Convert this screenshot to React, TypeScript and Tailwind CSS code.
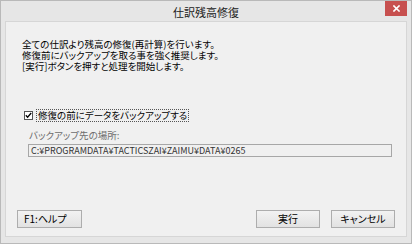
import React from "react";

const jp = "font-['Noto_Sans_CJK_JP','Noto_Sans_CJK_SC',sans-serif] [font-feature-settings:'palt']";

function Btn({ children, className = "" }: { children: React.ReactNode; className?: string }) {
  return (
    <div
      className={`h-[18px] w-[64px] flex items-center border border-[#adadad] bg-gradient-to-b from-[#f2f2f2] to-[#e2e2e2] text-[10px] leading-none text-black ${className}`}
    >
      {children}
    </div>
  );
}

export default function App() {
  return (
    <div className={`w-[412px] h-[244px] bg-[#e6e6e6] border border-[#b9b9b9] flex flex-col ${jp}`}>
      <div className="relative h-[20px] shrink-0 flex items-center justify-center">
        <span className="text-[11px] leading-none text-[#222] mt-[3px]">仕訳残高修復</span>
        <div className="absolute right-[4px] top-0 w-[22px] h-[15px] bg-[#c7504f] flex items-center justify-center">
          <svg width="7" height="7" viewBox="0 0 7 7">
            <path d="M1 1L6 6M6 1L1 6" stroke="#fff" strokeWidth="1.6" strokeLinecap="square" />
          </svg>
        </div>
      </div>
      <div className="mx-[4px] mb-[6px] flex-1 border border-[#d6d6d6] bg-[#f0f0f0] flex flex-col">
        <div className="pl-[16px] pt-[17px] text-[9.5px] leading-[11px] text-black">
          <div>全ての仕訳より残高の修復(再計算)を行います。</div>
          <div>修復前にバックアップを取る事を強く推奨します。</div>
          <div>[実行]ボタンを押すと処理を開始します。</div>
        </div>
        <div className="mt-[37px] pl-[18px] flex items-center h-[13px]">
          <div className="w-[9px] h-[9px] border border-[#555] bg-white flex items-center justify-center">
            <svg width="7" height="7" viewBox="0 0 7 7">
              <path d="M0.8 3.2L2.6 5.2L6.2 1" stroke="#000" strokeWidth="1.3" fill="none" />
            </svg>
          </div>
          <div className="ml-[3px] h-[13px] px-[1px] border border-dotted border-[#555] flex items-center text-[9.5px] leading-none text-black">
            修復の前にデータをバックアップする
          </div>
        </div>
        <div className="mt-[7px] pl-[23px] text-[9.5px] leading-[12px] text-[#6d6d6d]">バックアップ先の場所:</div>
        <div className="mt-[3px] ml-[22px] w-[364px] h-[13px] border border-[#a7a7a7] bg-[#f0f0f0] flex items-center pl-[2px] text-[9px] leading-none text-[#333]">
          C:¥PROGRAMDATA¥TACTICSZAI¥ZAIMU¥DATA¥0265
        </div>
        <div className="mt-auto mb-[8px] flex items-center pl-[11px] pr-[11px]">
          <Btn className="w-[65px] pl-[6px]">F1:ヘルプ</Btn>
          <div className="flex-1" />
          <Btn className="justify-center">実行</Btn>
          <Btn className="ml-[11px] justify-center">キャンセル</Btn>
        </div>
      </div>
    </div>
  );
}
